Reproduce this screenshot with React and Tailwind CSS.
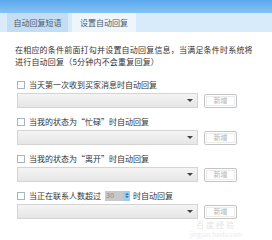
import React from 'react';

const font = { fontFamily: '"Noto Sans CJK SC", "Noto Sans", sans-serif' };

const RULES = [
  { key: 'first', label: '当天第一次收到买家消息时自动回复' },
  { key: 'busy', label: '当我的状态为“忙碌”时自动回复' },
  { key: 'away', label: '当我的状态为“离开”时自动回复' },
  { key: 'count' },
];

function Checkbox() {
  return <span className="w-[8px] h-[8px] border border-[#a9b4c0] bg-white shrink-0" />;
}

function SelectRow() {
  return (
    <div className="flex items-center mt-[3px]">
      <div className="w-[181px] h-[15px] border border-[#d4d4d4] bg-gradient-to-b from-[#f4f4f4] to-[#e6e6e6] flex items-center justify-end pr-[4px]">
        <span className="w-0 h-0 border-l-[3px] border-r-[3px] border-t-[3px] border-l-transparent border-r-transparent border-t-[#444]" />
      </div>
      <button className="ml-[6px] w-[33px] h-[14px] border border-[#c4c4c4] rounded-[2px] bg-white p-[1px]">
        <span className="flex items-center justify-center w-full h-full border border-[#ececec] text-[7px] leading-none text-[#b4b4b4]">新增</span>
      </button>
    </div>
  );
}

export default function App() {
  return (
    <div className="w-[272px] h-[240px] bg-white overflow-hidden relative text-[#333]" style={font}>
      <div className="h-[13px] bg-gradient-to-b from-[#5aa8ec] to-[#86c3f3]" />
      <div className="h-[19px] bg-[#d7ebfa] flex items-stretch pl-[7px]">
        <div className="w-[61px] bg-[#c3def4] flex items-center justify-center text-[8px] text-[#4a5866]">自动回复短语</div>
        <div className="ml-[4px] w-[64px] bg-[#eef6fc] flex items-center justify-center text-[8px] text-[#4a5866]">设置自动回复</div>
      </div>

      <p className="mt-[12px] pl-[15px] text-[8px] leading-[12px] tracking-[0.2px]">
        在相应的条件前面打勾并设置自动回复信息，当满足条件时系统将<br />
        进行自动回复（5分钟内不会重复回复）
      </p>

      <div className="mt-[11px] pl-[17px] flex flex-col gap-[8px]">
        {RULES.map(r => (
          <div key={r.key}>
            <div className="h-[11px] flex items-center gap-[4px] text-[8px] leading-none">
              <Checkbox />
              {r.label ? (
                <span>{r.label}</span>
              ) : (
                <span className="flex items-center">
                  当正在联系人数超过
                  <span className="ml-[4px] flex items-stretch h-[10px]">
                    <span className="w-[18px] bg-[#c9c9c9] text-[#888] text-[7px] flex items-center pl-[1px]">30</span>
                    <span className="w-[7px] bg-[#9ccdf2] flex flex-col items-center justify-center gap-[1px]">
                      <span className="w-0 h-0 border-l-[2px] border-r-[2px] border-b-[2px] border-l-transparent border-r-transparent border-b-[#3a6f9c]" />
                      <span className="w-0 h-0 border-l-[2px] border-r-[2px] border-t-[2px] border-l-transparent border-r-transparent border-t-[#3a6f9c]" />
                    </span>
                  </span>
                  <span className="ml-[3px]">时自动回复</span>
                </span>
              )}
            </div>
            <SelectRow />
          </div>
        ))}
      </div>

      <div className="absolute left-[190px] top-[220px] flex flex-col items-center gap-[2px] opacity-40">
        <div className="text-[8px] leading-[9px] text-[#bbb] tracking-[2px]">百度经验</div>
        <div className="text-[6px] leading-[7px] text-[#ccc]">jingyan.baidu.com</div>
      </div>
    </div>
  );
}
